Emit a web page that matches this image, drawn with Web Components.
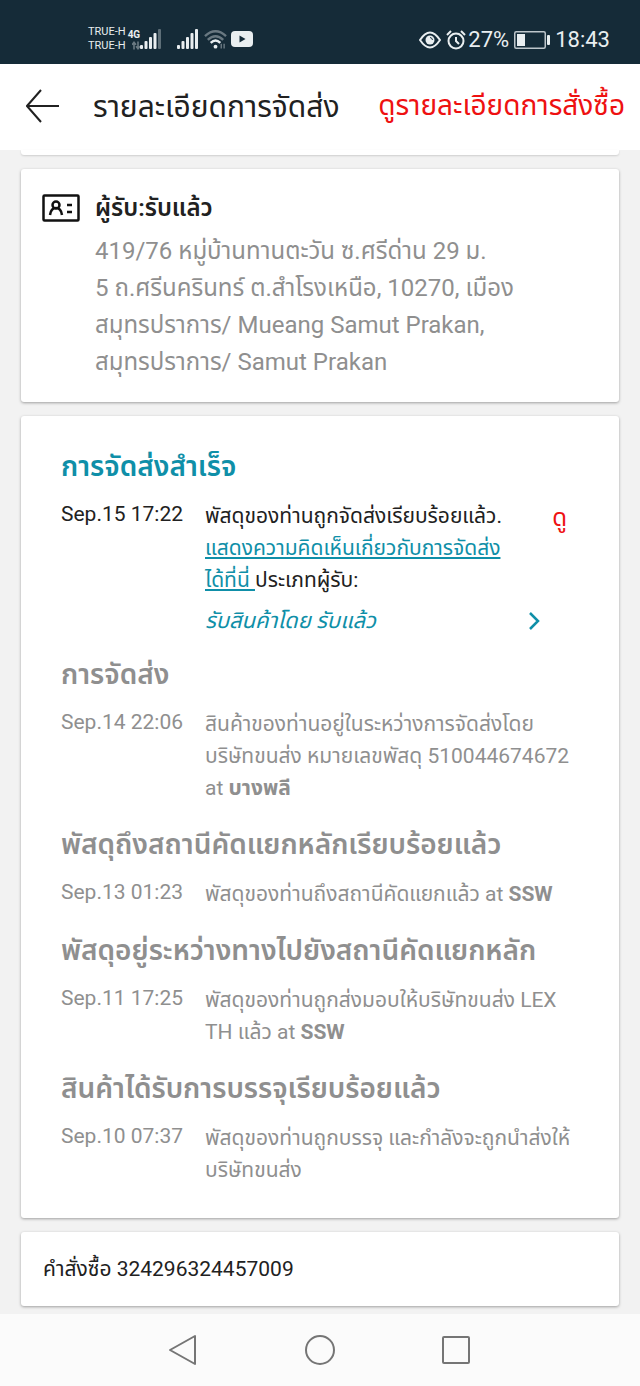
<!DOCTYPE html>
<html lang="th">
<head>
<meta charset="utf-8">
<meta name="viewport" content="width=device-width, initial-scale=1">
<title>รายละเอียดการจัดส่ง</title>
<style>
  body {
    margin: 0;
    min-height: 100vh;
    display: flex;
    flex-direction: column;
    background: #f2f2f2;
    color: #212121;
    font-family: Roboto, "Noto Sans Thai", "Noto Sans", sans-serif;
    font-size: 21px;
    line-height: 32px;
  }
  main {
    flex: 1;
    display: flex;
    flex-direction: column;
    gap: 14px;
    padding: 0 20px 7px;
  }
  a { color: #0f8fa8; }
  .view { color: #ee1111; text-decoration: none; }
  .order { font-size: 28px; line-height: 40px; }
  .photo { font-size: 24px; line-height: 36px; }
  .done { display: flex; justify-content: space-between; padding-right: 28px; }
  .received {
    display: flex;
    justify-content: space-between;
    align-items: center;
    padding: 9px 55px 0 0;
    margin-bottom: -3px;
    color: #0f8fa8;
    font-size: 22px;
    font-style: italic;
    text-decoration: none;
  }
</style>
</head>
<body>
<status-bar></status-bar>
<app-header>
  รายละเอียดการจัดส่ง
  <a slot="action" class="view order" href="#order">ดูรายละเอียดการสั่งซื้อ</a>
</app-header>
<main>
  <info-card class="cut"></info-card>
  <info-card>
    <receiver-info>
      <span slot="name">ผู้รับ:รับแล้ว</span>
      419/76 หมู่บ้านทานตะวัน ซ.ศรีด่าน 29 ม.<br>
      5 ถ.ศรีนครินทร์ ต.สำโรงเหนือ, 10270, เมือง<br>
      สมุทรปราการ/ Mueang Samut Prakan,<br>
      สมุทรปราการ/ Samut Prakan
    </receiver-info>
  </info-card>
  <info-card>
    <track-list>
      <track-event active heading="การจัดส่งสำเร็จ" time="Sep.15 17:22">
        <div class="done">
          <div>พัสดุของท่านถูกจัดส่งเรียบร้อยแล้ว.<br>
            <a href="#review">แสดงความคิดเห็นเกี่ยวกับการจัดส่ง<br>ได้ที่นี่&nbsp;</a>ประเภทผู้รับ:</div>
          <a class="view photo" href="#photo">ดู</a>
        </div>
        <a class="received" href="#receiver">รับสินค้าโดย รับแล้ว
          <svg width="12" height="20" viewBox="0 0 12 20" fill="none" stroke="currentColor" stroke-width="2.5" aria-hidden="true"><path d="M2 2l8 8-8 8"/></svg>
        </a>
      </track-event>
      <track-event heading="การจัดส่ง" time="Sep.14 22:06">
        สินค้าของท่านอยู่ในระหว่างการจัดส่งโดย<br>
        บริษัทขนส่ง หมายเลขพัสดุ 510044674672<br>
        at <b>บางพลี</b>
      </track-event>
      <track-event heading="พัสดุถึงสถานีคัดแยกหลักเรียบร้อยแล้ว" time="Sep.13 01:23">
        พัสดุของท่านถึงสถานีคัดแยกแล้ว at <b>SSW</b>
      </track-event>
      <track-event heading="พัสดุอยู่ระหว่างทางไปยังสถานีคัดแยกหลัก" time="Sep.11 17:25">
        พัสดุของท่านถูกส่งมอบให้บริษัทขนส่ง LEX<br>
        TH แล้ว at <b>SSW</b>
      </track-event>
      <track-event heading="สินค้าได้รับการบรรจุเรียบร้อยแล้ว" time="Sep.10 07:37">
        พัสดุของท่านถูกบรรจุ และกำลังจะถูกนำส่งให้<br>
        บริษัทขนส่ง
      </track-event>
    </track-list>
  </info-card>
  <info-card>
    <order-number>คำสั่งซื้อ 324296324457009</order-number>
  </info-card>
</main>
<nav-bar></nav-bar>

<script>
// Attaches an open shadow root holding the given style and markup
function render(el, style, html) {
  el.attachShadow({ mode: 'open' }).innerHTML = `<style>${style}</style>${html}`;
}

// --- Phone status bar ------------------------------------------------------
// Rising signal bars; `dim` is how many of the last ones are faded
function signal(dim) {
  let bars = '';
  for (let i = 0; i < 5; i++) {
    const h = 4 + i * 4;
    bars += `<rect x="${i * 4.5}" y="${20 - h}" width="3" height="${h}" rx="1" opacity="${i >= 5 - dim ? 0.35 : 1}"/>`;
  }
  return `<svg width="21" height="20" viewBox="0 0 21 20" fill="currentColor">${bars}</svg>`;
}

class StatusBar extends HTMLElement {
  connectedCallback() {
    render(this, `
      :host {
        display: flex;
        justify-content: space-between;
        align-items: center;
        box-sizing: border-box;
        height: 64px;
        padding: 14px 30px 0 88px;
        background: #152b38;
        color: #e9eef0;
      }
      .side { display: flex; align-items: center; }
      .carriers { font-size: 11px; line-height: 14px; }
      .net { display: flex; flex-direction: column; align-items: flex-end; margin-left: 2px; font-size: 10px; font-weight: 700; line-height: 12px; }
      .net svg { opacity: .4; }
      .second { display: flex; margin: 0 6px 0 16px; }
      .tube { margin-left: 4px; }
      .right { padding-top: 2px; font-size: 22px; line-height: 28px; gap: 5px; }
      .alarm { margin-right: -3px; }
    `, `
      <div class="side">
        <div class="carriers">TRUE-H<br>TRUE-H</div>
        <div class="net">4G
          <svg width="8" height="9" viewBox="0 0 10 10" fill="none" stroke="currentColor" stroke-width="2"><path d="M2.500 10V2M0 4l2.500-3L5 4M7.500 0v8M5 6l2.500 3L10 6"/></svg>
        </div>
        ${signal(1)}
        <span class="second">${signal(0)}</span>
        <svg width="23" height="20" viewBox="0 0 24 20" fill="none" stroke="currentColor" stroke-width="2.500">
          <path d="M1 7Q12-3 23 7" opacity=".4"/>
          <path d="M4 11Q12 3 20 11" opacity=".4"/>
          <path d="M7 14q5-5 10 0"/>
          <circle cx="12" cy="18" r="2" fill="currentColor" stroke="none"/>
          <path d="M18 15v5M21 15v5" stroke-width="1.500" opacity=".4"/>
        </svg>
        <svg class="tube" width="22" height="16" viewBox="0 0 22 16"><rect width="22" height="16" rx="4" fill="currentColor"/><path d="M8.500 4.500v7l6-3.500z" fill="#152b38"/></svg>
      </div>
      <div class="side right">
        <svg width="22" height="18" viewBox="0 0 22 18" fill="none" stroke="currentColor" stroke-width="2"><path d="M1 9Q11-6 21 9Q11 24 1 9z"/><circle cx="11" cy="9" r="4.500" fill="currentColor" stroke="none"/><path d="M11 6.500q2 0 2.500 2.500" stroke="#152b38" stroke-width="1"/></svg>
        <svg class="alarm" width="20" height="20" viewBox="0 0 20 20" fill="none" stroke="currentColor" stroke-width="2"><circle cx="10" cy="11" r="7.500"/><path d="M1 5l4-4M19 5l-4-4M10 7v4l3 3"/></svg>
        <span>27%</span>
        <svg width="36" height="18" viewBox="0 0 36 18"><rect x=".75" y=".75" width="30.500" height="16.500" rx="1.500" fill="none" stroke="currentColor" stroke-width="1.500" opacity=".8"/><rect x="3" y="3" width="8" height="12" fill="currentColor"/><rect x="33" y="4" width="3" height="10" rx="1" fill="currentColor"/></svg>
        <span>18:43</span>
      </div>
    `);
  }
}
customElements.define('status-bar', StatusBar);

// --- Title row with back button -------------------------------------------
class AppHeader extends HTMLElement {
  connectedCallback() {
    render(this, `
      :host {
        display: flex;
        align-items: center;
        box-sizing: border-box;
        height: 86px;
        padding: 0 15px 2px 26px;
        background: #fff;
        white-space: nowrap;
      }
      button { display: flex; padding: 0; border: 0; background: none; color: inherit; }
      h1 { flex: 1; margin: 2px 0 0 34px; font-size: 30px; font-weight: 400; line-height: 40px; }
    `, `
      <button aria-label="กลับ">
        <svg width="33" height="34" viewBox="0 0 33 34" fill="none" stroke="currentColor" stroke-width="2"><path d="M15 1L1 17l14 16M1 17h32"/></svg>
      </button>
      <h1><slot></slot></h1>
      <slot name="action"></slot>
    `);
  }
}
customElements.define('app-header', AppHeader);

// --- White panel -----------------------------------------------------------
class InfoCard extends HTMLElement {
  connectedCallback() {
    render(this, `
      :host {
        display: block;
        margin: 0 1px;
        border-radius: 3px;
        background: #fff;
        box-shadow: 0 1px 3px rgba(0, 0, 0, .35);
      }
      :host(.cut) { height: 5px; border-radius: 0 0 3px 3px; box-shadow: 0 1px 2px rgba(0, 0, 0, .15); }
    `, `<slot></slot>`);
  }
}
customElements.define('info-card', InfoCard);

// --- Receiver name and address ---------------------------------------------
class ReceiverInfo extends HTMLElement {
  connectedCallback() {
    render(this, `
      :host {
        display: grid;
        grid-template-columns: 38px 1fr;
        column-gap: 15px;
        padding: 21px 21px;
      }
      svg { margin-top: 4px; }
      h2 { margin: 0 0 7px; font-size: 24px; font-weight: 600; line-height: 36px; }
      p { margin: 0; color: #8f8f8f; font-size: 24px; line-height: 37px; }
    `, `
      <svg width="38" height="28" viewBox="0 0 38 28" fill="none" stroke="#111" stroke-width="2.500"><rect x="1.500" y="1.500" width="35" height="25" rx="1"/><circle cx="14" cy="11" r="3.500"/><path d="M8 21q1-7 6-7t6 7M25 11h5M25 18h5"/></svg>
      <div>
        <h2><slot name="name"></slot></h2>
        <p><slot></slot></p>
      </div>
    `);
  }
}
customElements.define('receiver-info', ReceiverInfo);

// --- Delivery history ------------------------------------------------------
class TrackList extends HTMLElement {
  connectedCallback() {
    render(this, `
      :host { display: flex; flex-direction: column; gap: 24px; padding: 34px 24px 32px 40px; }
    `, `<slot></slot>`);
  }
}
customElements.define('track-list', TrackList);

class TrackEvent extends HTMLElement {
  connectedCallback() {
    render(this, `
      :host { display: block; color: #8f8f8f; }
      :host([active]) { color: #212121; }
      h3 { margin: 0 0 16px; font-size: 28px; font-weight: 600; line-height: 34px; }
      :host([active]) h3 { color: #0f8fa8; }
      .row { display: grid; grid-template-columns: 132px 1fr; column-gap: 12px; }
      time { line-height: 28px; white-space: nowrap; }
    `, `
      <h3></h3>
      <div class="row"><time></time><div><slot></slot></div></div>
    `);
    this.shadowRoot.querySelector('h3').textContent = this.getAttribute('heading');
    this.shadowRoot.querySelector('time').textContent = this.getAttribute('time');
  }
}
customElements.define('track-event', TrackEvent);

class OrderNumber extends HTMLElement {
  connectedCallback() {
    render(this, `
      :host { display: block; padding: 21px 22px; }
    `, `<slot></slot>`);
  }
}
customElements.define('order-number', OrderNumber);

// --- Android navigation keys -----------------------------------------------
class NavBar extends HTMLElement {
  connectedCallback() {
    render(this, `
      :host {
        display: flex;
        justify-content: center;
        align-items: center;
        gap: 104px;
        height: 72px;
        background: #fbfbfb;
      }
      button { display: flex; padding: 0; border: 0; background: none; color: #757575; }
      svg { fill: none; stroke: currentColor; stroke-width: 2; stroke-linejoin: round; }
    `, `
      <button aria-label="ย้อนกลับ"><svg width="32" height="32" viewBox="0 0 32 32"><path d="M27 2v28L2 16z"/></svg></button>
      <button aria-label="หน้าหลัก"><svg width="32" height="32" viewBox="0 0 32 32"><circle cx="16" cy="16" r="14"/></svg></button>
      <button aria-label="แอปล่าสุด"><svg width="32" height="32" viewBox="0 0 32 32"><rect x="3" y="3" width="26" height="26" rx="1"/></svg></button>
    `);
  }
}
customElements.define('nav-bar', NavBar);
</script>
</body>
</html>
